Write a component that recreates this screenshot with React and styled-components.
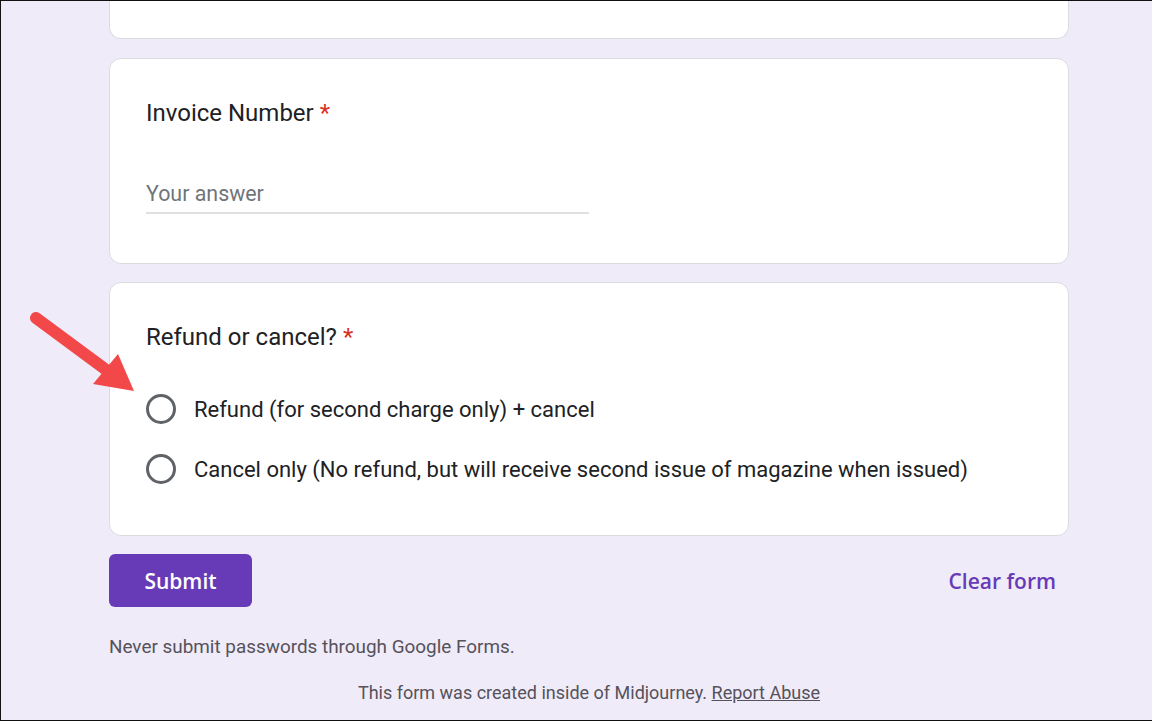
import React from 'react';
import styled, { createGlobalStyle } from 'styled-components';

const GlobalStyle = createGlobalStyle`
  html, body {
    margin: 0;
    padding: 0;
    background: #f0ebf8;
  }
  body {
    font-family: Roboto, "Liberation Sans", Arial, sans-serif;
  }
`;

const Frame = styled.div`
  position: relative;
  box-sizing: border-box;
  height: 721px;
  overflow: hidden;
  background: #f0ebf8;
  border-top: 1px solid #111;
  border-left: 1px solid #111;
  border-bottom: 1px solid #111;
`;

const Column = styled.div`
  width: 960px;
  margin-left: 108px;
  display: flex;
  flex-direction: column;
`;

const Card = styled.section`
  box-sizing: border-box;
  background: #fff;
  border: 1px solid #dadce0;
  border-radius: 12px;
  padding: 36px 36px ${p => p.$bottom || 49}px;
  margin-bottom: 18px;
`;

const CutCard = styled(Card)`
  height: 38px;
  padding: 0;
  margin-bottom: 19px;
  border-top: none;
  border-top-left-radius: 0;
  border-top-right-radius: 0;
`;

const Title = styled.div`
  font-size: 24px;
  line-height: 36px;
  color: #202124;
`;

const Required = styled.span`
  color: #d93025;
  margin-left: 6px;
`;

const AnswerField = styled.div`
  width: 443px;
  margin-top: 48px;
  padding-bottom: 3px;
  border-bottom: 2px solid #e0e0e0;
  font-size: 21.4px;
  line-height: 30px;
  color: #70757a;
`;

const Options = styled.div`
  margin-top: 24px;
  display: flex;
  flex-direction: column;
`;

const Option = styled.label`
  display: flex;
  align-items: center;
  gap: 18px;
  height: 60px;
  font-size: 22px;
  color: #202124;
`;

const Radio = styled.span`
  box-sizing: border-box;
  width: 30px;
  height: 30px;
  border-radius: 50%;
  border: 3px solid #5f6368;
  flex: none;
`;

const Actions = styled.div`
  display: flex;
  align-items: center;
  justify-content: space-between;
  padding-right: 13px;
`;

const SubmitButton = styled.button`
  width: 143px;
  height: 53px;
  border: none;
  border-radius: 6px;
  background: #673ab7;
  color: #fff;
  font-family: "Open Sans", Roboto, sans-serif;
  font-weight: 600;
  font-size: 21px;
  cursor: pointer;
`;

const ClearLink = styled.a`
  font-family: "Open Sans", Roboto, sans-serif;
  font-weight: 600;
  font-size: 21px;
  color: #673ab7;
  text-decoration: none;
`;

const Note = styled.p`
  margin: 28px 0 0;
  font-size: 18.9px;
  line-height: 24px;
  color: #55525b;
`;

const Footer = styled.p`
  margin: 22px 0 0;
  text-align: center;
  font-size: 18px;
  line-height: 24px;
  color: #55525b;
  a {
    color: inherit;
    text-decoration: underline;
  }
`;

const Pointer = styled.svg`
  position: absolute;
  left: 0;
  top: 0;
  pointer-events: none;
`;

export default function App() {
  return (
    <>
      <GlobalStyle />
      <Frame>
        <Column>
          <CutCard />
          <Card>
            <Title>Invoice Number<Required>*</Required></Title>
            <AnswerField>Your answer</AnswerField>
          </Card>
          <Card $bottom={36}>
            <Title>Refund or cancel?<Required>*</Required></Title>
            <Options>
              <Option><Radio />Refund (for second charge only) + cancel</Option>
              <Option><Radio />Cancel only (No refund, but will receive second issue of magazine when issued)</Option>
            </Options>
          </Card>
          <Actions>
            <SubmitButton>Submit</SubmitButton>
            <ClearLink href="#">Clear form</ClearLink>
          </Actions>
          <Note>Never submit passwords through Google Forms.</Note>
          <Footer>This form was created inside of Midjourney. <a href="#">Report Abuse</a></Footer>
        </Column>
        <Pointer width="150" height="400" viewBox="0 0 150 400">
          <line x1="35" y1="317" x2="104" y2="368" stroke="#f2484a" strokeWidth="12" strokeLinecap="round" />
          <polygon points="133,390 92,383 117,353" fill="#f2484a" />
        </Pointer>
      </Frame>
    </>
  );
}
